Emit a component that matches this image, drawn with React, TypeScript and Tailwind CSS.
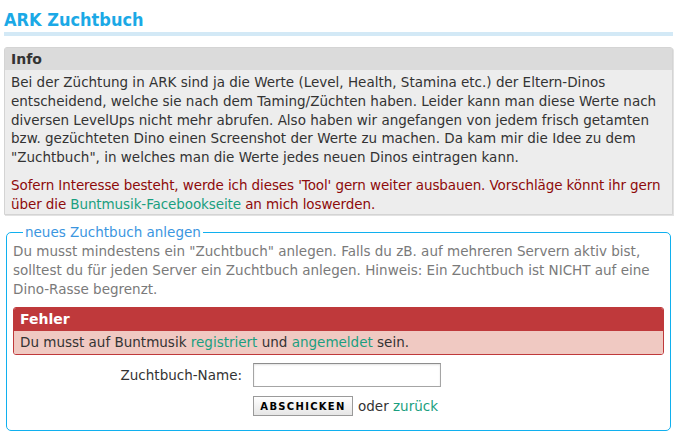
/**
 * ZuchtbuchAnlegen — "neues Zuchtbuch anlegen" page of the ARK Zuchtbuch.
 *
 * Static rendering: title bar, info box, and the create-form fieldset with
 * the login error notice.
 */

import React from 'react';

// ── Small pieces ───────────────────────────────────────────────────────────

function GreenLink({ children }: { children: React.ReactNode }) {
  return <a className="text-[#1a9f80] no-underline">{children}</a>;
}

function InfoBox() {
  return (
    <section className="mt-[11px] rounded-t-[3px] border border-[#d4d4d4] bg-[#ededed] shadow-[1px_1px_0_#e2e2e2]">
      <h2 className="h-[22px] bg-[#dbdbdb] px-[6px] text-[14px] leading-[22px] font-bold text-[#333]">Info</h2>
      <div className="px-[6px] pt-[3px] pb-[1px] leading-[18.75px] whitespace-nowrap text-[#333]">
        <p>
          Bei der Züchtung in ARK sind ja die Werte (Level, Health, Stamina etc.) der Eltern-Dinos
          <br />
          entscheidend, welche sie nach dem Taming/Züchten haben. Leider kann man diese Werte nach
          <br />
          diversen LevelUps nicht mehr abrufen. Also haben wir angefangen von jedem frisch getamten
          <br />
          bzw. gezüchteten Dino einen Screenshot der Werte zu machen. Da kam mir die Idee zu dem
          <br />
          "Zuchtbuch", in welches man die Werte jedes neuen Dinos eintragen kann.
        </p>
        <p className="mt-[9px] tracking-[-0.1px] text-[#8e0a0a]">
          Sofern Interesse besteht, werde ich dieses 'Tool' gern weiter ausbauen. Vorschläge könnt ihr gern
          <br />
          über die <GreenLink>Buntmusik-Facebookseite</GreenLink> an mich loswerden.
        </p>
      </div>
    </section>
  );
}

function ErrorBox() {
  return (
    <div className="mt-[8px] overflow-hidden rounded-[3px] border border-[#bf393b]">
      <div className="h-[23px] bg-[#bf393b] px-[6px] text-[14px] leading-[23px] font-bold text-white">Fehler</div>
      <div className="h-[23px] bg-[#f0c9c2] px-[6px] leading-[22px] text-[#333]">
        Du musst auf Buntmusik <GreenLink>registriert</GreenLink> und <GreenLink>angemeldet</GreenLink> sein.
      </div>
    </div>
  );
}

function CreateForm() {
  return (
    <fieldset className="mx-[2px] mt-[8px] rounded-[5px] border border-[#10b0ef] px-[6px] pb-[13px]">
      <legend className="ml-[10px] px-[2px] leading-[19px] text-[#3b96df]">neues Zuchtbuch anlegen</legend>
      <p className="leading-[19px] text-[#7a7a7a]">
        Du musst mindestens ein "Zuchtbuch" anlegen. Falls du zB. auf mehreren Servern aktiv bist,
        solltest du für jeden Server ein Zuchtbuch anlegen. Hinweis: Ein Zuchtbuch ist NICHT auf eine
        Dino-Rasse begrenzt.
      </p>
      <ErrorBox />
      <div className="mt-[8px] grid grid-cols-[229px_auto] items-center gap-x-[11px] gap-y-[9px]">
        <label className="text-right text-[#333]">Zuchtbuch-Name:</label>
        <input
          type="text"
          className="h-[24px] w-[188px] border border-[#a5a5a5] border-t-[#8d8d8d] bg-white shadow-[inset_0_1px_2px_rgba(0,0,0,0.12)] outline-none"
        />
        <div />
        <div className="flex items-center gap-[5px] text-[#333]">
          <button
            type="button"
            className="h-[20px] w-[100px] border border-[#9a9a9a] bg-gradient-to-b from-white to-[#e6e6e6] text-[10px] font-bold tracking-[1.3px] text-black"
          >
            ABSCHICKEN
          </button>
          <span>
            oder <GreenLink>zurück</GreenLink>
          </span>
        </div>
      </div>
    </fieldset>
  );
}

// ── Page ───────────────────────────────────────────────────────────────────

export default function App(): React.ReactElement {
  return (
    <div className="min-h-[438px] bg-white px-[4px] font-['DejaVu_Sans',sans-serif] text-[13.5px]">
      <h1 className="border-b-4 border-[#d3e9f6] pt-[8px] font-['DejaVu_Sans_Condensed','DejaVu_Sans',sans-serif] text-[18px] leading-[24px] font-bold text-[#1ba9e6]">
        ARK Zuchtbuch
      </h1>
      <InfoBox />
      <CreateForm />
    </div>
  );
}
